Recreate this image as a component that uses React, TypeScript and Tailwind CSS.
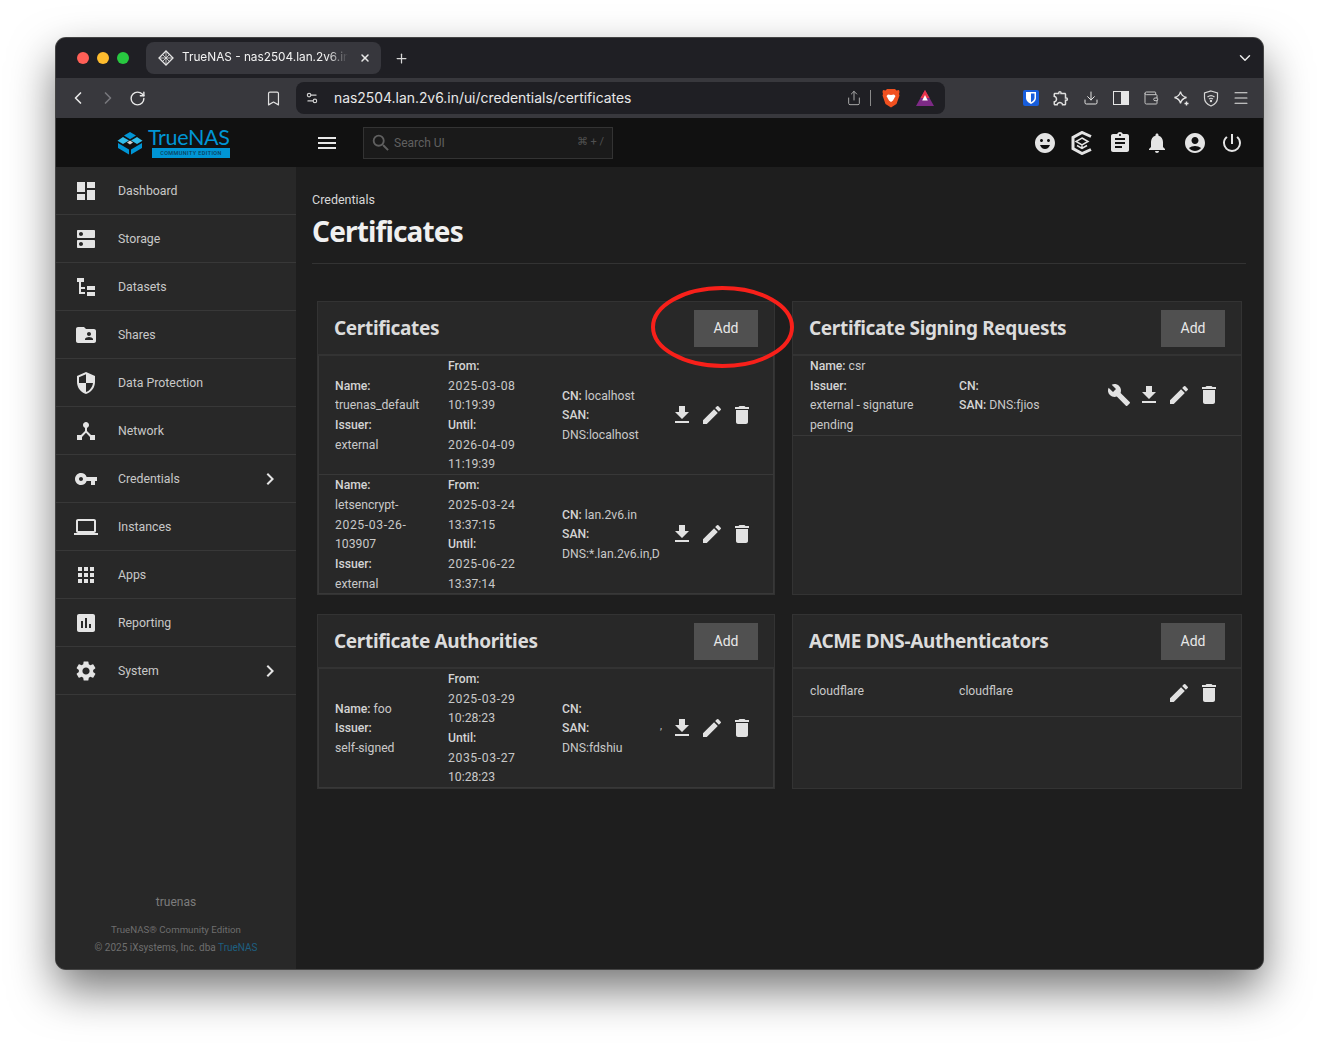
import React from "react";
import {
  MdDashboard,
  MdDns,
  MdFolderShared,
  MdSecurity,
  MdDeviceHub,
  MdVpnKey,
  MdLaptop,
  MdApps,
  MdAssessment,
  MdSettings,
  MdChevronRight,
  MdFileDownload,
  MdEdit,
  MdDelete,
  MdBuild,
  MdAssignment,
  MdNotifications,
  MdAccountCircle,
  MdPowerSettingsNew,
  MdEmojiEmotions,
  MdMenu,
  MdSearch,
  MdOutlineExtension,
} from "react-icons/md";
import {
  ChevronLeft,
  ChevronRight,
  ChevronDown,
  RotateCw,
  Bookmark,
  Share,
  Download,
  Wallet,
  Menu,
  Plus,
  X,
  Settings2,
} from "lucide-react";

function DatasetIcon() {
  return (
    <svg width="24" height="24" viewBox="0 0 24 24" fill="currentColor">
      <rect x="3" y="3" width="7" height="4" />
      <path d="M5 7h2v5h4v2H7v3h4v2H5z" />
      <rect x="13" y="11" width="8" height="4" />
      <rect x="13" y="17" width="8" height="4" />
    </svg>
  );
}

function TrueNasMark() {
  return (
    <svg width="26" height="24" viewBox="0 0 26 24">
      <path d="M13 1l6 3.600-6 3.600-6-3.600z" fill="#0095d5" />
      <path d="M6 6l6 3.600-6 3.400-5.500-3.300z" fill="#31beec" />
      <path d="M20 6l5.500 3.700-5.500 3.300-6-3.400z" fill="#31beec" />
      <path d="M13 9.500l3 2-3 2-3-2z" fill="#d0d0d0" />
      <path d="M1 12l11 6.500v5L1 17z" fill="#0095d5" />
      <path d="M25 12l-11 6.500v5L25 17z" fill="#0095d5" />
    </svg>
  );
}

function Logo() {
  return (
    <div className="flex items-center gap-[5px] pl-[61px]">
      <TrueNasMark />
      <div className="flex w-[82px] flex-col items-end">
        <span className="w-full font-['Lato',sans-serif] text-[21.500px] leading-[20px] tracking-[-0.3px] text-[#0095d5]">
          TrueNAS
        </span>
        <span className="mt-[1px] w-[78px] bg-[#0095d5] text-center font-['Roboto',sans-serif] text-[5.500px] leading-[10px] font-medium tracking-[0.4px] text-[#0d3f5a]">
          COMMUNITY EDITION
        </span>
      </div>
    </div>
  );
}

function BraveIcon() {
  return (
    <svg width="18" height="20" viewBox="0 0 18 20">
      <path d="M5 1h8l1.500 1.500L17 2l.5 2-.5 2 .5 1.500L14.500 16 9 19.500 3.500 16 .5 7.500 1 6 .5 4 1 2l2.500.5z" fill="#f1501f" />
      <path d="M9 14l-2-1.500L4.500 8 6 6.500l3 .5 3-.5L13.500 8 11 12.500z" fill="#fff" />
    </svg>
  );
}

function BatIcon() {
  return (
    <svg width="18" height="16" viewBox="0 0 18 16">
      <path d="M9 0l9 16H0z" fill="#7d2a86" />
      <path d="M9 0l4.500 8h-9z" fill="#e8344a" />
      <path d="M9 5l2.800 5.500H6.200z" fill="#fff" />
    </svg>
  );
}

function BitwardenIcon() {
  return (
    <span className="flex h-[16px] w-[16px] items-center justify-center rounded-[2px] bg-[#175ddc]">
      <svg width="10" height="12" viewBox="0 0 10 12">
        <path d="M0 0h10v6c0 3-3 5-5 6-2-1-5-3-5-6z" fill="#fff" />
        <path d="M5 1.500h3.500V6c0 2-2 3.300-3.500 4.200z" fill="#175ddc" />
      </svg>
    </span>
  );
}

function ShieldIcon() {
  return (
    <svg width="16" height="17" viewBox="0 0 16 17" fill="none" stroke="#d6d6d6" strokeWidth="1.200">
      <path d="M8 1l6.500 2v5c0 4-3 6.500-6.500 8C4.500 14.500 1.500 12 1.500 8V3z" />
      <path d="M4.500 7c2-1.600 5-1.600 7 0M6 9c1.200-.9 2.800-.9 4 0" />
      <circle cx="8" cy="11" r=".6" fill="#d6d6d6" />
    </svg>
  );
}

function StarPlusIcon() {
  return (
    <svg width="17" height="17" viewBox="0 0 17 17" fill="none" stroke="#e6e6e6" strokeWidth="1.300">
      <path d="M7.500 1.500c.6 3.400 2.100 5 6 6-3.900 1-5.400 2.600-6 6-.6-3.400-2.100-5-6-6 3.900-1 5.400-2.600 6-6z" />
      <path d="M13.500 11.500v4M11.500 13.500h4" strokeWidth="1.400" />
    </svg>
  );
}

function SidePanelIcon() {
  return (
    <span className="flex h-[14px] w-[16px] border-[1.5px] border-[#e6e6e6]">
      <span className="w-1/2" />
      <span className="w-1/2 bg-[#e6e6e6]" />
    </span>
  );
}

function FaviconMark() {
  return (
    <svg width="16" height="16" viewBox="0 0 16 16" fill="none" stroke="#e4e4e4" strokeWidth="1.300">
      <path d="M8 1l7 7-7 7-7-7z" />
      <path d="M4.500 4.500l7 7M11.500 4.500l-7 7M8 1v14M1 8h14" strokeWidth=".8" />
    </svg>
  );
}

function TitleBar() {
  return (
    <div className="flex h-[40px] items-center bg-[#1f1f24] pl-[21px] pr-[9px]">
      <div className="flex gap-[8px]">
        <span className="h-[12px] w-[12px] rounded-full bg-[#ff5f57]" />
        <span className="h-[12px] w-[12px] rounded-full bg-[#febc2e]" />
        <span className="h-[12px] w-[12px] rounded-full bg-[#28c840]" />
      </div>
      <div className="ml-[17px] flex h-[32px] w-[235px] items-center rounded-[8px] bg-[#37373d] pl-[12px] pr-[10px]">
        <FaviconMark />
        <span className="ml-[8px] w-[166px] overflow-hidden whitespace-nowrap font-['Inter',sans-serif] text-[11.800px] text-[#f2f2f2] [mask-image:linear-gradient(to_right,black_88%,transparent)]">
          TrueNAS - nas2504.lan.2v6.in
        </span>
        <X size={12} strokeWidth={3} className="ml-auto text-[#e8e8e8]" />
      </div>
      <Plus size={15} strokeWidth={2} className="ml-[13px] text-[#d8d8d8]" />
      <ChevronDown size={18} strokeWidth={2} className="ml-auto text-[#e8e8e8]" />
    </div>
  );
}

function Toolbar() {
  return (
    <div className="flex h-[40px] items-center bg-[#38383d] pl-[12px]">
      <ChevronLeft size={20} strokeWidth={2} className="text-[#e8e8e8]" />
      <ChevronRight size={20} strokeWidth={2} className="ml-[10px] text-[#77777c]" />
      <RotateCw size={17} strokeWidth={2} className="ml-[11px] text-[#e8e8e8]" />
      <Bookmark size={17} strokeWidth={1.700} className="ml-[119px] text-[#e0e0e0]" />
      <div className="ml-[14px] flex h-[32px] w-[649px] items-center rounded-[8px] bg-[#1f1f24] pl-[9px] pr-[11px]">
        <Settings2 size={14} className="text-[#cfcfcf]" />
        <span className="ml-[15px] font-['Inter',sans-serif] text-[13.900px] text-[#e8e8e8]">
          nas2504.lan.2v6.in/ui/credentials/certificates
        </span>
        <Share size={16} strokeWidth={1.500} className="ml-auto text-[#a8a8a8]" />
        <span className="ml-[8px] h-[16px] w-px bg-[#8a8a8a]" />
        <span className="ml-[11px] flex"><BraveIcon /></span>
        <span className="ml-[16px] flex"><BatIcon /></span>
      </div>
      <div className="ml-[78px] flex items-center">
        <BitwardenIcon />
        <MdOutlineExtension size={18} className="ml-[13px] text-[#dedede]" />
        <Download size={16} strokeWidth={1.500} className="ml-[13px] text-[#e4e4e4]" />
        <span className="ml-[14px] flex"><SidePanelIcon /></span>
        <Wallet size={16} strokeWidth={1.500} className="ml-[14px] text-[#c4c4c4]" />
        <span className="ml-[14px] flex"><StarPlusIcon /></span>
        <span className="ml-[13px] flex"><ShieldIcon /></span>
        <Menu size={18} strokeWidth={1.400} className="ml-[13px] text-[#e6e6e6]" />
      </div>
    </div>
  );
}

function AppHeader() {
  return (
    <div className="flex h-[49px] items-center bg-[#111111] font-['Roboto',sans-serif]">
      <div className="w-[240px]">
        <Logo />
      </div>
      <MdMenu size={24} className="ml-[19px] text-[#e8e8e8]" />
      <div className="ml-[24px] flex h-[32px] w-[250px] items-center border border-[#333333] bg-[#1a1a1a] pl-[6px] pr-[8px]">
        <MdSearch size={22} className="text-[#5f5f5f]" />
        <span className="ml-[2px] text-[12px] text-[#606060]">Search UI</span>
        <span className="ml-auto text-[11px] text-[#505050]">⌘ + /</span>
      </div>
      <div className="ml-auto flex items-center gap-[13.500px] pr-[19px] text-[#e4e4e4]">
        <MdEmojiEmotions size={24} />
        <svg width="24" height="24" viewBox="0 0 24 24" fill="none" stroke="currentColor">
          <path d="M21 5.500l-9-4-9 5v11l9 5 9-4" strokeWidth="3" />
          <path d="M12 7l6 3.500-6 3.500-6-3.500zM7 14.500l5 3 5-3M12 14v3" strokeWidth="1.500" />
        </svg>
        <MdAssignment size={24} />
        <MdNotifications size={24} />
        <MdAccountCircle size={24} />
        <MdPowerSettingsNew size={24} />
      </div>
    </div>
  );
}

const navItems: { label: string; icon: React.ReactNode; arrow?: boolean }[] = [
  { label: "Dashboard", icon: <MdDashboard size={24} /> },
  { label: "Storage", icon: <MdDns size={24} /> },
  { label: "Datasets", icon: <DatasetIcon /> },
  { label: "Shares", icon: <MdFolderShared size={24} /> },
  { label: "Data Protection", icon: <MdSecurity size={24} /> },
  { label: "Network", icon: <MdDeviceHub size={24} /> },
  { label: "Credentials", icon: <MdVpnKey size={24} />, arrow: true },
  { label: "Instances", icon: <MdLaptop size={24} /> },
  { label: "Apps", icon: <MdApps size={24} /> },
  { label: "Reporting", icon: <MdAssessment size={24} /> },
  { label: "System", icon: <MdSettings size={24} />, arrow: true },
];

function Sidebar() {
  return (
    <aside className="flex w-[240px] shrink-0 flex-col bg-[#282828] font-['Roboto',sans-serif]">
      {navItems.map((item) => (
        <div
          key={item.label}
          className="flex h-[48px] items-center border-b border-[#383838] pl-[18px] pr-[14px] text-[#e4e4e4]"
        >
          <span className="flex w-[44px]">{item.icon}</span>
          <span className="pt-[2px] text-[12.300px] text-[#c8c8c8]">{item.label}</span>
          {item.arrow && <MdChevronRight size={24} className="ml-auto" />}
        </div>
      ))}
      <div className="mt-auto pb-[14px] text-center">
        <div className="text-[12px] text-[#7c7c7c]">truenas</div>
        <div className="mt-[12px] text-[9.700px] text-[#6e6e6e]">TrueNAS® Community Edition</div>
        <div className="mt-[2px] text-[10px] text-[#6e6e6e]">
          © 2025 iXsystems, Inc. dba <span className="text-[#1d5f80]">TrueNAS</span>
        </div>
      </div>
    </aside>
  );
}

function Field({ label, value }: { label?: string; value?: string }) {
  const isDate = !!value && /^\d{4}-/.test(value);
  return (
    <div
      className={
        isDate
          ? "h-[19.700px] overflow-hidden whitespace-nowrap leading-[20px] tracking-[0.6px]"
          : "h-[19.700px] overflow-hidden whitespace-nowrap leading-[20px]"
      }
    >
      {label && <span className="font-medium text-[#d4d4d4]">{label}</span>}
      {label && value && " "}
      {value}
    </div>
  );
}

function Actions({ wrench, download = true }: { wrench?: boolean; download?: boolean }) {
  return (
    <div className="flex items-center justify-end gap-[6px] text-[#e2e2e2]">
      {wrench && <MdBuild size={24} />}
      {download && <MdFileDownload size={24} />}
      <MdEdit size={24} />
      <MdDelete size={24} />
    </div>
  );
}

function Card({ title, children }: { title: string; children: React.ReactNode }) {
  return (
    <section className="flex min-h-0 flex-col border border-[#333333] bg-[#282828]">
      <div className="flex h-[52px] shrink-0 items-center justify-between pl-[16px] pr-[16px]">
        <h2 className="font-['Noto_Sans',sans-serif] text-[19px] font-bold tracking-[-0.35px] text-[#dcdcdc]">
          {title}
        </h2>
        <button className="h-[37px] w-[64px] bg-[#505050] text-[14px] text-[#e8e8e8]">Add</button>
      </div>
      <div className="min-h-0 flex-1 border-t-2 border-[#333333]">{children}</div>
    </section>
  );
}

function CertRow({
  col1,
  col2,
  col3,
  comma,
}: {
  col1: [string?, string?][];
  col2: [string?, string?][];
  col3: [string?, string?][];
  comma?: boolean;
}) {
  return (
    <div className="grid grid-cols-[113px_114px_100px_1fr] items-center border-b border-l border-r border-[#383838] pl-[16px] pr-[19px] text-[12.200px] text-[#c8c8c8]">
      <div>{col1.map(([l, v], i) => <Field key={i} label={l} value={v} />)}</div>
      <div>{col2.map(([l, v], i) => <Field key={i} label={l} value={v} />)}</div>
      <div>{col3.map(([l, v], i) => <Field key={i} label={l} value={v} />)}</div>
      <div className="relative">
        {comma && <span className="absolute left-[-2px] top-[2px] text-[10px] text-[#c8c8c8]">,</span>}
        <Actions />
      </div>
    </div>
  );
}

function Page() {
  return (
    <main className="relative flex-1 bg-[#1e1e1e] pl-[16px] pr-[17px] pt-[25px] font-['Roboto',sans-serif]">
      <div className="text-[12.500px] leading-[16px] text-[#d8d8d8]">Credentials</div>
      <h1 className="mt-[5px] border-b border-[#333333] pb-[14px] font-['Noto_Sans',sans-serif] text-[28px] leading-[36px] font-bold tracking-[-0.85px] text-[#f0f0f0]">
        Certificates
      </h1>
      <div className="ml-[5px] mt-[37px] grid grid-cols-[458px_450px] grid-rows-[294px_175px] gap-x-[17px] gap-y-[19px]">
        <Card title="Certificates">
          <CertRow
            col1={[["Name:"], [undefined, "truenas_default"], ["Issuer:"], [undefined, "external"]]}
            col2={[["From:"], [undefined, "2025-03-08"], [undefined, "10:19:39"], ["Until:"], [undefined, "2026-04-09"], [undefined, "11:19:39"]]}
            col3={[["CN:", "localhost"], ["SAN:"], [undefined, "DNS:localhost"]]}
          />
          <CertRow
            col1={[["Name:"], [undefined, "letsencrypt-"], [undefined, "2025-03-26-"], [undefined, "103907"], ["Issuer:"], [undefined, "external"]]}
            col2={[["From:"], [undefined, "2025-03-24"], [undefined, "13:37:15"], ["Until:"], [undefined, "2025-06-22"], [undefined, "13:37:14"]]}
            col3={[["CN:", "lan.2v6.in"], ["SAN:"], [undefined, "DNS:*.lan.2v6.in,D"]]}
          />
        </Card>
        <Card title="Certificate Signing Requests">
          <div className="grid grid-cols-[149px_120px_1fr] items-center border-b border-[#383838] pl-[17px] pr-[20px] text-[12.200px] text-[#c8c8c8]">
            <div>
              <Field label="Name:" value="csr" />
              <Field label="Issuer:" />
              <Field value="external - signature" />
              <Field value="pending" />
            </div>
            <div>
              <Field label="CN:" />
              <Field label="SAN:" value="DNS:fjios" />
            </div>
            <Actions wrench />
          </div>
        </Card>
        <Card title="Certificate Authorities">
          <CertRow
            col1={[["Name:", "foo"], ["Issuer:"], [undefined, "self-signed"]]}
            col2={[["From:"], [undefined, "2025-03-29"], [undefined, "10:28:23"], ["Until:"], [undefined, "2035-03-27"], [undefined, "10:28:23"]]}
            col3={[["CN:"], ["SAN:"], [undefined, "DNS:fdshiu"]]}
            comma
          />
        </Card>
        <Card title="ACME DNS-Authenticators">
          <div className="grid h-[48px] grid-cols-[149px_120px_1fr] items-center border-b border-[#383838] pl-[17px] pr-[20px] text-[12.200px] text-[#c8c8c8]">
            <span className="pb-[2px]">cloudflare</span>
            <span className="pb-[2px]">cloudflare</span>
            <Actions download={false} />
          </div>
        </Card>
      </div>
      <svg
        className="absolute left-[355px] top-[119px]"
        width="144"
        height="84"
        viewBox="0 0 144 84"
        fill="none"
      >
        <ellipse cx="71.500" cy="41" rx="69.500" ry="39" stroke="#f8201a" strokeWidth="4" />
      </svg>
    </main>
  );
}

export default function App() {
  return (
    <div className="h-[1043px] w-[1319px] overflow-hidden bg-white pl-[56px] pt-[38px]">
      <div className="flex h-[931px] w-[1207px] flex-col overflow-hidden rounded-[10px] bg-[#1e1e1e] shadow-[0_0_0_1px_#444,0_20px_45px_rgba(0,0,0,0.55)]">
        <TitleBar />
        <Toolbar />
        <AppHeader />
        <div className="flex flex-1">
          <Sidebar />
          <Page />
        </div>
      </div>
    </div>
  );
}
